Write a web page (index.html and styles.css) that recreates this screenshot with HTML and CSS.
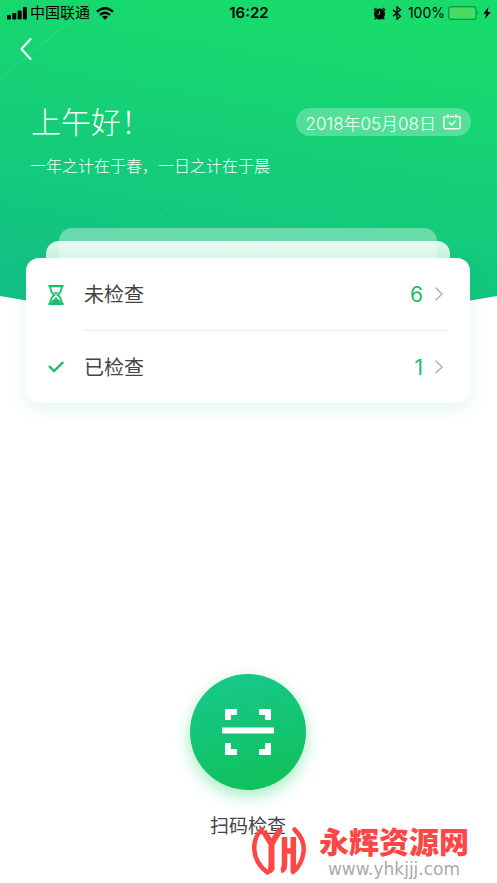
FILE: index.html
```html
<!DOCTYPE html>
<html lang="zh-CN">
<head>
<meta charset="utf-8">
<meta name="viewport" content="width=device-width, initial-scale=1">
<title>扫码检查</title>
<link rel="stylesheet" href="styles.css">
</head>
<body>
<div class="page">
  <header class="hero">
    <svg class="hero-lines" viewBox="0 0 497 340" preserveAspectRatio="none" aria-hidden="true">
      <path d="M0 79 68 23" stroke="#fff" stroke-opacity=".12"/>
      <path d="M128 243 196 187" stroke="#fff" stroke-opacity=".06"/>
    </svg>
    <div class="status">
      <div class="status-side">
        <svg width="20" height="13" viewBox="0 0 20 13" aria-hidden="true"><rect y="8" width="4" height="4.500" rx="1"/><rect x="5.300" y="6" width="4" height="6.500" rx="1"/><rect x="10.600" y="3.500" width="4" height="9" rx="1"/><rect x="15.900" y="0" width="4" height="12.500" rx="1"/></svg>
        <span class="carrier">中国联通</span>
        <svg class="wifi" width="18" height="13" viewBox="0 0 18 13" fill="none" stroke="#000" stroke-width="2.300" aria-hidden="true"><path d="M1 4.700Q9-2.300 17 4.700M4 7.900Q9 3.500 14 7.900"/><path d="M6 9.800Q9 7.500 12 9.800L9 12.800Z" fill="#000" stroke="none"/></svg>
      </div>
      <time class="clock">16:22</time>
      <div class="status-side status-right">
        <svg width="13" height="13" viewBox="0 0 13 13" aria-hidden="true"><circle cx="6.500" cy="7" r="5.500"/><path d="M.8 3.200 3.300 1M12.200 3.200 9.700 1M2.700 11 1.800 12.300M10.300 11l.9 1.300" stroke="#000" stroke-width="1.400"/><path d="M6.700 4.300v3H4.500" fill="none" stroke="#19d96d" stroke-width="1"/></svg>
        <svg class="bluetooth" width="10" height="14" viewBox="0 0 10 14" fill="none" stroke="#000" stroke-width="1.300" aria-hidden="true"><path d="m1 3.800 7.500 6.400L5 13.200V.8l3.500 3L1 10.200"/></svg>
        <span class="charge">100%</span>
        <svg width="32" height="14" viewBox="0 0 32 14" aria-hidden="true"><rect x=".6" y=".6" width="27.500" height="12.800" rx="2.500" fill="none" stroke="#0b9c50" stroke-width="1.200"/><rect x="2" y="2" width="24.700" height="10" rx="1" fill="#4cd964"/><path d="M29.300 4.800q2 2.200 0 4.400z" fill="#0b9c50"/></svg>
        <svg width="8" height="12" viewBox="0 0 8 12" aria-hidden="true"><path d="M5.500 0 .3 6.800h2.800L2 12l5.700-7H4.600z"/></svg>
      </div>
    </div>
    <button class="back" type="button" aria-label="返回">
      <svg width="12" height="22" viewBox="0 0 12 22" fill="none" stroke="#fff" stroke-width="2" stroke-linecap="round" stroke-linejoin="round" aria-hidden="true"><path d="M10.500 1 1.500 11l9 10"/></svg>
    </button>
    <div class="greeting">
      <h1>上午好！</h1>
      <button class="date" type="button">
        <span>2018年05月08日</span>
        <svg width="18" height="16" viewBox="0 0 18 16" fill="none" stroke="#fff" stroke-width="1.400" stroke-linecap="round" stroke-linejoin="round" aria-hidden="true"><path d="M3.300 2.500H2.700q-1.900 0-1.900 1.900v8.400q0 1.900 1.900 1.900h12.600q1.900 0 1.900-1.900V4.400q0-1.900-1.900-1.900h-.6M7 2.500h4M5 .8v3M13 .8v3M6.200 8.700l2.400 2.200 3.600-3.600"/></svg>
      </button>
    </div>
    <p class="motto">一年之计在于春，一日之计在于晨</p>
  </header>

  <main class="main">
    <div class="stack">
      <div class="layer layer-back"></div>
      <div class="layer layer-mid"></div>
      <nav class="card">
        <a class="row" href="#pending">
          <svg width="16" height="20" viewBox="0 0 16 20" aria-hidden="true"><path d="M.4 1.100h15.200M.4 18.800h15.200" stroke="#1bbd68" stroke-width="2.200"/><path d="M2.200 1.500Q2.400 7 6.300 10 2.400 13 2.200 18.500M13.800 1.500Q13.600 7 9.700 10q3.900 3 4.100 8.500" fill="none" stroke="#1bbd68" stroke-width="1.800"/><path d="M5.500 6.800q2.500 1 5 0L8 10zM8 11.800q.8 2.200 4.500 4.200v3h-9v-3Q7.200 14 8 11.800z" fill="#1bbd68"/></svg>
          <span class="row-body"><span class="row-name">未检查</span><span class="count">6</span>
          <svg width="8" height="14" viewBox="0 0 8 14" fill="none" stroke="#b2b2b2" stroke-width="1.500" stroke-linecap="round" aria-hidden="true"><path d="m1 1 6 6-6 6"/></svg></span>
        </a>
        <a class="row" href="#done">
          <svg width="16" height="20" viewBox="0 0 16 20" fill="none" stroke="#1bbd68" stroke-width="2.400" aria-hidden="true"><path d="m1 9 5 5 9.200-8.800"/></svg>
          <span class="row-body"><span class="row-name">已检查</span><span class="count">1</span>
          <svg width="8" height="14" viewBox="0 0 8 14" fill="none" stroke="#b2b2b2" stroke-width="1.500" stroke-linecap="round" aria-hidden="true"><path d="m1 1 6 6-6 6"/></svg></span>
        </a>
      </nav>
    </div>

    <div class="scan">
      <button class="scan-button" id="scan" type="button" aria-labelledby="scan-label">
        <svg width="52" height="48" viewBox="0 0 52 48" aria-hidden="true"><path d="M3 1h12v6H9v5H3zM37 1h12v11h-6V7h-6zM3 35h6v6h6v6H3zM43 35h6v12H37v-6h6zM0 19.500h52v6H0z" fill="#fff"/></svg>
      </button>
      <label class="scan-label" id="scan-label" for="scan">扫码检查</label>
    </div>
  </main>

  <aside class="watermark">
    <svg width="56" height="50" viewBox="0 0 56 50" fill="none" stroke="#fc4747" aria-hidden="true">
      <path d="M10.500 3.500Q2.500 12 3.300 24 4.500 38 16.500 46.500" stroke-width="4.500" stroke-linecap="round"/>
      <path d="M43.500 3.500Q53.500 13 52.700 25 51 39 42 46" stroke-width="4.500" stroke-linecap="round"/>
      <path d="M12.500 5 20.500 18 29.500 3M20.500 16V44" stroke-width="6"/>
      <path d="M23.500 42Q22 48.500 16.500 47L17.500 40z" fill="#fc4747" stroke="none"/>
      <path d="M33.500 11V38q0 6-3.500 6.500M42.300 11V46M33.500 25h9" stroke-width="5.500"/>
    </svg>
    <div class="watermark-text">
      <strong>永辉资源网</strong>
      <span>www.yhkjjj.com</span>
    </div>
  </aside>
</div>
</body>
</html>
```
FILE: styles.css
```css
* { box-sizing: border-box; }

body {
  margin: 0;
  background: #fff;
  color: #444;
  font-family: Inter, "Noto Sans CJK SC", sans-serif;
}

button {
  margin: 0;
  padding: 0;
  border: 0;
  background: none;
  color: inherit;
  font: inherit;
  cursor: pointer;
}

svg { display: block; flex: none; }

.page {
  position: relative;
  display: flex;
  flex-direction: column;
  min-height: 100vh;
  overflow: hidden;
}

.hero {
  position: relative;
  padding-bottom: 160px;
  background: linear-gradient(190deg, #18db6b 10%, #11bf86 90%);
  clip-path: polygon(0 0, 100% 0, 100% calc(100% - 42px), 50% 100%, 0 calc(100% - 42px));
  color: #fff;
}

.hero-lines {
  position: absolute;
  inset: 0;
  width: 100%;
  height: 100%;
}

.status {
  position: relative;
  display: grid;
  grid-template-columns: 1fr auto 1fr;
  align-items: center;
  height: 26px;
  padding: 0 6px 0 7px;
  color: #000;
  font-size: 15px;
  line-height: 24px;
}

.status-side { display: flex; align-items: center; gap: 3px; }
.status-right { justify-content: flex-end; }
.wifi { margin-left: 3px; }
.bluetooth { margin: 0 3px; }
.charge { font-size: 14px; }
.clock { font-weight: 600; }

.back {
  position: relative;
  display: block;
  margin: 4px 0 0 12px;
  padding: 8px;
}

.greeting {
  display: flex;
  align-items: center;
  justify-content: space-between;
  margin-top: 32px;
  padding: 0 26px 0 31px;
}

h1 {
  margin: 0;
  font-size: 30px;
  font-weight: 300;
  line-height: 44px;
}

.date {
  display: flex;
  align-items: center;
  gap: 7px;
  height: 28px;
  padding: 0 10px;
  border-radius: 14px;
  background: rgba(255, 255, 255, .27);
  font-size: 17px;
  font-weight: 300;
}

.motto {
  margin: 10px 30px 0;
  font-size: 16px;
  font-weight: 300;
  line-height: 24px;
}

.main {
  position: relative;
  display: flex;
  flex: 1;
  flex-direction: column;
  justify-content: space-between;
  margin-top: -110px;
}

.stack { padding: 0 27px 0 26px; }

.layer { border-radius: 13px 13px 0 0; }
.layer-back {
  height: 30px;
  margin: 0 33px;
  background: rgba(255, 255, 255, .36);
}
.layer-mid {
  height: 17px;
  margin: -17px 20px 0;
  background: linear-gradient(rgba(255, 255, 255, .86), rgba(255, 255, 255, .78));
}

.card {
  padding: 0 22px;
  border-radius: 13px;
  background: #fff;
  box-shadow: 0 6px 20px rgba(27, 189, 104, .12);
}

.row {
  display: flex;
  align-items: center;
  gap: 20px;
  color: #444;
  text-decoration: none;
}

.row-body {
  display: flex;
  flex: 1;
  align-items: center;
  gap: 12px;
  height: 72px;
  padding-right: 5px;
}
.row:first-child .row-body { height: 73px; border-bottom: 1px solid #ececec; }

.row-name,
.scan-label {
  font-family: "Noto Sans CJK SC", sans-serif;
  line-height: 30px;
}
.row-name { flex: 1; font-size: 20px; }
.count { color: #1bbd68; font-size: 21px; }

.scan {
  display: flex;
  flex-direction: column;
  align-items: center;
  gap: 20px;
  padding: 0 1px 43px 0;
}

.scan-button {
  display: grid;
  place-items: center;
  width: 116px;
  height: 116px;
  border-radius: 50%;
  background: linear-gradient(165deg, #16c888 10%, #10c15c 90%);
  box-shadow: 0 6px 16px rgba(24, 210, 100, .4);
}

.scan-label { font-size: 19px; }

.watermark {
  position: absolute;
  right: 28px;
  bottom: 5px;
  display: flex;
  align-items: center;
  gap: 12px;
}

.watermark-text { display: flex; flex-direction: column; }
.watermark strong {
  color: #fc4747;
  font-size: 30px;
  font-weight: 900;
  line-height: 36px;
}
.watermark span {
  color: #aaa;
  font-family: "DejaVu Sans", sans-serif;
  font-size: 17px;
  line-height: 18px;
  text-align: center;
}
```
